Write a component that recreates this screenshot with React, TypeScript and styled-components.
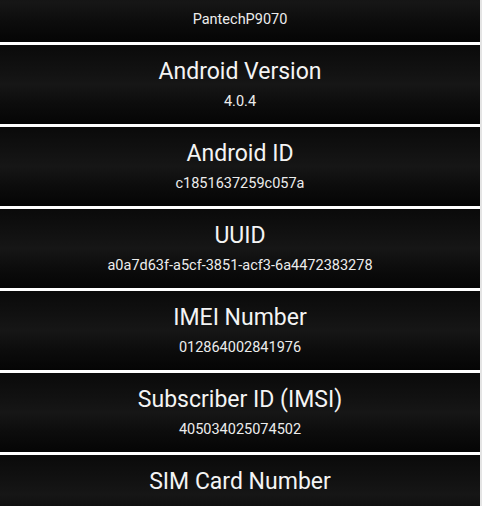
import React from 'react';
import styled, { createGlobalStyle } from 'styled-components';

const GlobalStyle = createGlobalStyle`
  html, body {
    margin: 0;
    padding: 0;
    height: 100%;
    overflow: hidden;
    background: #e4e4e4;
    font-family: Roboto, "Noto Sans", "Liberation Sans", sans-serif;
  }
`;

const Screen = styled.main`
  width: 480px;
  height: 506px;
  overflow: hidden;
  background: #ffffff;
`;

// the list is scrolled a little, so the first row is cut at the top
const List = styled.ul`
  list-style: none;
  margin: -37px 0 0;
  padding: 0;
  display: flex;
  flex-direction: column;
  gap: 3px;
`;

const Row = styled.li`
  height: 79px;
  box-sizing: border-box;
  padding-top: 13px;
  display: flex;
  flex-direction: column;
  align-items: center;
  gap: 7px;
  background: linear-gradient(
    to bottom,
    #0a0a0a 0%,
    #111111 30%,
    #161616 50%,
    #0c0c0c 75%,
    #050505 100%
  );
  color: #f4f4f4;
`;

const Title = styled.div`
  font-size: 23px;
  line-height: 28px;
`;

const Value = styled.div`
  font-size: 14.5px;
  line-height: 18px;
  color: #ececec;
`;

const items: { title: string; value?: string }[] = [
  { title: 'Device Model', value: 'PantechP9070' },
  { title: 'Android Version', value: '4.0.4' },
  { title: 'Android ID', value: 'c1851637259c057a' },
  { title: 'UUID', value: 'a0a7d63f-a5cf-3851-acf3-6a4472383278' },
  { title: 'IMEI Number', value: '012864002841976' },
  { title: 'Subscriber ID (IMSI)', value: '405034025074502' },
  { title: 'SIM Card Number' },
];

export default function App() {
  return (
    <>
      <GlobalStyle />
      <Screen>
        <List>
          {items.map(item => (
            <Row key={item.title}>
              <Title>{item.title}</Title>
              {item.value && <Value>{item.value}</Value>}
            </Row>
          ))}
        </List>
      </Screen>
    </>
  );
}
